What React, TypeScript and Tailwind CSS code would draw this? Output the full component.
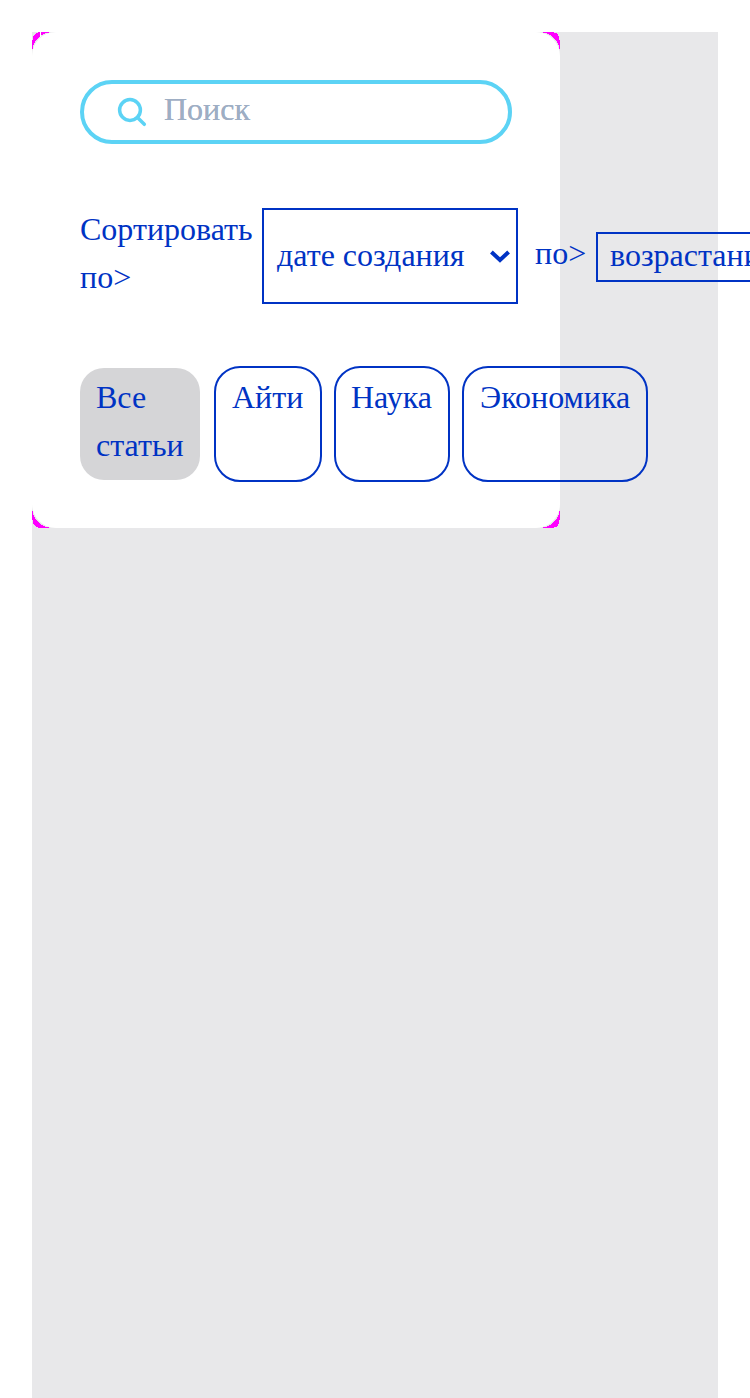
const Corner = ({ className }: { className: string }) => (
  <svg className={`absolute h-6 w-6 ${className}`} viewBox="0 0 24 24" shapeRendering="crispEdges" aria-hidden="true">
    <path d="M0 17V8H1V5L2 3L4 1L8 0H17V1H14L10 3L7.3 5L5 7.3L3 10L1 14V17Z" fill="#ff00ff" />
  </svg>
);

const Chip = ({ label, className }: { label: string; className: string }) => (
  <button className={`flex shrink-0 items-start rounded-[26px] border-2 border-[#0033c4] pt-[5px] text-left ${className}`}>
    <span>{label}</span>
  </button>
);

export default function App() {
  return (
    <main className="h-[1398px] w-[750px] overflow-hidden bg-white px-8 pt-8 font-['Liberation_Serif',serif] text-[32px] leading-[48px] text-[#0033c4]">
      <div className="h-[1366px] w-[686px] bg-[#e8e8ea]">
        <section className="relative h-[496px] w-[528px] rounded-3xl bg-white px-12 pt-12">
          <Corner className="left-0 top-0" />
          <Corner className="right-0 top-0 -scale-x-100" />
          <Corner className="bottom-0 left-0 -scale-y-100" />
          <Corner className="bottom-0 right-0 rotate-180" />
          <span className="absolute left-2 top-0 h-[5px] w-px bg-white" />

          <label className="flex h-16 w-[432px] items-center rounded-full border-4 border-[#5cd3f5] pl-8">
            <svg className="h-8 w-8 shrink-0" viewBox="0 0 32 32" fill="none" stroke="#5cd3f5" strokeWidth="3.5" strokeLinecap="round" aria-hidden="true">
              <circle cx="14" cy="14" r="10.4" />
              <path d="M21.7 21.7L28.3 28.3" />
            </svg>
            <input className="-mt-1.5 ml-4 h-12 w-[280px] bg-transparent outline-none placeholder:text-[#9eaec4] placeholder:opacity-100 [text-shadow:0_0_0_#9eaec4]" placeholder="Поиск" />
          </label>

          <div className="mt-16 flex h-24 w-[850px] items-center">
            <span className="-mt-1.5 w-[182px] shrink-0">Сортировать<br />по&gt;</span>
            <button className="flex h-24 w-64 shrink-0 items-center border-2 border-[#0033c4] pl-[13px] text-left">
              <span className="-mt-0.5 w-[213px]">дате создания</span>
              <svg className="h-5 w-5" viewBox="0 0 20 20" fill="none" stroke="#0033c4" strokeWidth="4" aria-hidden="true">
                <path d="M1.4 6L10 14L18.6 6" />
              </svg>
            </button>
            <span className="-mt-1.5 ml-[17px] w-[61px] shrink-0">по&gt;</span>
            <button className="mt-0.5 flex h-[50px] w-64 shrink-0 items-center border-2 border-[#0033c4] pl-3 text-left">
              <span className="-mt-1">возрастанию</span>
            </button>
          </div>

          <nav className="mt-[62px] flex h-[116px] w-[568px]">
            <button className="mr-3.5 mt-0.5 flex h-28 w-[120px] shrink-0 items-start rounded-3xl bg-[#d5d5d7] px-4 pt-[5px] text-left">
              <span>Все<br />статьи</span>
            </button>
            <Chip label="Айти" className="mr-3 w-[108px] pl-4" />
            <Chip label="Наука" className="mr-3 w-[116px] pl-[15px]" />
            <Chip label="Экономика" className="w-[186px] pl-4" />
          </nav>
        </section>
      </div>
    </main>
  );
}
